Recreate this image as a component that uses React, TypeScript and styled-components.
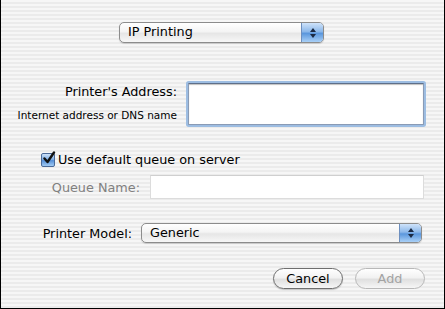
import React from 'react';
import styled, { createGlobalStyle } from 'styled-components';

const GlobalStyle = createGlobalStyle`
  html, body {
    margin: 0;
    padding: 0;
    background: #ffffff;
  }
  * {
    box-sizing: border-box;
  }
`;

const Sheet = styled.div`
  width: 445px;
  height: 309px;
  display: flex;
  flex-direction: column;
  border-left: 1px solid #000;
  border-right: 1px solid #000;
  border-bottom: 1px solid #000;
  background: repeating-linear-gradient(
    to bottom,
    #f6f6f6 0px,
    #f6f6f6 2px,
    #ebebeb 2px,
    #ebebeb 4px
  );
  font-family: "Lucida Grande", "DejaVu Sans", sans-serif;
  font-size: 12.8px;
  color: #000;
`;

const Row = styled.div<{ $top: number; $left?: number; $align?: string }>`
  display: flex;
  align-items: ${(p) => p.$align || 'center'};
  margin-top: ${(p) => p.$top}px;
  padding-left: ${(p) => p.$left || 0}px;
`;

const Popup = styled.div<{ $width: number; $height: number; $gap?: number }>`
  display: flex;
  align-items: center;
  width: ${(p) => p.$width}px;
  height: ${(p) => p.$height}px;
  margin-left: ${(p) => p.$gap || 0}px;
  border: 1px solid #8c8c8c;
  border-radius: 5px;
  background: linear-gradient(to bottom, #ffffff 0%, #f4f4f4 45%, #e6e6e6 55%, #f7f7f7 100%);
  box-shadow: 0 1px 1px rgba(0, 0, 0, 0.15);
  padding-left: 8px;
  overflow: hidden;
`;

const PopupText = styled.span`
  flex: 1;
  font-size: 12.8px;
  line-height: 1;
`;

const Arrows = styled.div`
  width: 22px;
  align-self: stretch;
  display: flex;
  flex-direction: column;
  align-items: center;
  justify-content: center;
  gap: 2px;
  border-left: 1px solid #6d8fbf;
  background: linear-gradient(to bottom, #cfe3fa 0%, #8cb8ea 45%, #5b97dd 55%, #a9d0f7 100%);
`;

const Title = styled(Row)`
  justify-content: center;
  padding-right: 2px;
`;

const LabelStack = styled.div`
  width: 176px;
  display: flex;
  flex-direction: column;
  align-items: flex-end;
  padding-top: 1px;
`;

const Label = styled.span<{ $muted?: boolean; $width?: number }>`
  font-size: 12.8px;
  color: ${(p) => (p.$muted ? '#808080' : '#000')};
  white-space: nowrap;
  text-align: right;
  width: ${(p) => (p.$width ? `${p.$width}px` : 'auto')};
`;

const Hint = styled.span`
  font-size: 10.5px;
  margin-top: 10px;
  white-space: nowrap;
`;

const FocusField = styled.div`
  margin-left: 11px;
  width: 236px;
  height: 42px;
  background: #fff;
  border: 1px solid #8a9bb5;
  border-top-color: #5e6f89;
  box-shadow: 0 0 0 2px #9dbde2, inset 0 1px 1px rgba(0, 0, 0, 0.25);
  border-radius: 1px;
`;

const PlainField = styled.div<{ $width: number }>`
  margin-left: 10px;
  width: ${(p) => p.$width}px;
  height: 24px;
  background: #fff;
  border: 1px solid #dcdcdc;
  border-top-color: #cfcfcf;
`;

const Check = styled.div`
  width: 14px;
  height: 14px;
  border: 1px solid #4a6a98;
  border-radius: 2px;
  background: linear-gradient(to bottom, #cde1f8 0%, #80b0e6 45%, #5690d8 55%, #a2cbf3 100%);
  position: relative;
  margin-right: 3px;
`;

const CheckText = styled.span`
  font-size: 12.8px;
`;

const Buttons = styled.div`
  display: flex;
  justify-content: flex-end;
  gap: 12px;
  margin-top: 25px;
  padding-right: 19px;
`;

const Button = styled.div<{ $disabled?: boolean }>`
  width: 70px;
  height: 21px;
  border-radius: 11px;
  display: flex;
  align-items: center;
  justify-content: center;
  font-size: 12.8px;
  color: ${(p) => (p.$disabled ? '#a3a3a3' : '#000')};
  border: 1px solid ${(p) => (p.$disabled ? '#b8b8b8' : '#6e6e6e')};
  background: linear-gradient(to bottom, #ffffff 0%, #f2f2f2 45%, #e0e0e0 55%, #f6f6f6 100%);
  box-shadow: ${(p) => (p.$disabled ? 'none' : '0 1px 1px rgba(0,0,0,0.2)')};
`;

const ArrowGlyph = () => (
  <>
    <svg width="6" height="4" viewBox="0 0 6 4">
      <path d="M3 0 L6 4 L0 4 Z" fill="#1b2a44" />
    </svg>
    <svg width="6" height="4" viewBox="0 0 6 4">
      <path d="M0 0 L6 0 L3 4 Z" fill="#1b2a44" />
    </svg>
  </>
);

const CheckMark = () => (
  <svg width="14" height="14" viewBox="0 0 14 14" style={{ position: 'absolute', left: 0, top: -3 }}>
    <path d="M2.5 7.5 L5.5 11 L12 1.5" stroke="#111" strokeWidth="2.4" fill="none" strokeLinecap="round" strokeLinejoin="round" />
  </svg>
);

export default function App() {
  return (
    <>
      <GlobalStyle />
      <Sheet>
        <Title $top={22}>
          <Popup $width={205} $height={21}>
            <PopupText>IP Printing</PopupText>
            <Arrows>
              <ArrowGlyph />
            </Arrows>
          </Popup>
        </Title>

        <Row $top={40} $align="flex-start">
          <LabelStack>
            <Label>Printer's Address:</Label>
            <Hint>Internet address or DNS name</Hint>
          </LabelStack>
          <FocusField />
        </Row>

        <Row $top={27} $left={40}>
          <Check>
            <CheckMark />
          </Check>
          <CheckText>Use default queue on server</CheckText>
        </Row>

        <Row $top={8}>
          <Label $muted $width={139}>Queue Name:</Label>
          <PlainField $width={274} />
        </Row>

        <Row $top={24}>
          <Label $width={131}>Printer Model:</Label>
          <Popup $width={281} $height={20} $gap={9}>
            <PopupText>Generic</PopupText>
            <Arrows>
              <ArrowGlyph />
            </Arrows>
          </Popup>
        </Row>

        <Buttons>
          <Button>Cancel</Button>
          <Button $disabled>Add</Button>
        </Buttons>
      </Sheet>
    </>
  );
}
